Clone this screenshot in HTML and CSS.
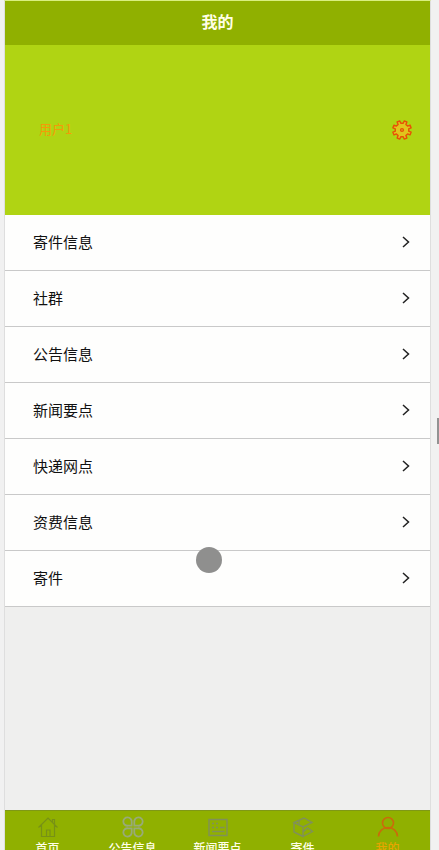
FILE: index.html
```html
<!DOCTYPE html>
<html lang="zh-CN">
<head>
    <meta charset="UTF-8">
    <meta name="viewport" content="width=device-width, initial-scale=1.0">
    <title>我的</title>
    <link rel="stylesheet" href="styles.css">
</head>
<body>

<div class="app">
    <header class="navbar">我的</header>

    <section class="profile">
        <span class="user-name">用户1</span>
        <svg class="gear" viewBox="-10 -10 20 20">
            <path d="M6.700 1.200 9.100 2.200 8 4.900 5.600 3.900 3.900 5.600 4.900 8 2.200 9.100 1.200 6.700H-1.200L-2.200 9.100-4.900 8-3.900 5.600-5.600 3.900-8 4.900-9.100 2.200-6.700 1.200V-1.200L-9.100-2.200-8-4.900-5.600-3.900-3.900-5.600-4.900-8-2.200-9.100-1.200-6.700H1.200L2.200-9.100 4.900-8 3.900-5.600 5.600-3.900 8-4.900 9.100-2.200 6.700-1.200Z"/>
            <circle cx="0" cy="0" r="1.400"/>
        </svg>
    </section>

    <nav class="menu">
        <a class="menu-item"><span>寄件信息</span><svg class="arrow" viewBox="0 0 8 12"><path d="M1 1l5.500 5L1 11"/></svg></a>
        <a class="menu-item"><span>社群</span><svg class="arrow" viewBox="0 0 8 12"><path d="M1 1l5.500 5L1 11"/></svg></a>
        <a class="menu-item"><span>公告信息</span><svg class="arrow" viewBox="0 0 8 12"><path d="M1 1l5.500 5L1 11"/></svg></a>
        <a class="menu-item"><span>新闻要点</span><svg class="arrow" viewBox="0 0 8 12"><path d="M1 1l5.500 5L1 11"/></svg></a>
        <a class="menu-item"><span>快递网点</span><svg class="arrow" viewBox="0 0 8 12"><path d="M1 1l5.500 5L1 11"/></svg></a>
        <a class="menu-item"><span>资费信息</span><svg class="arrow" viewBox="0 0 8 12"><path d="M1 1l5.500 5L1 11"/></svg></a>
        <a class="menu-item"><span>寄件</span><svg class="arrow" viewBox="0 0 8 12"><path d="M1 1l5.500 5L1 11"/></svg></a>
    </nav>

    <footer class="tabbar">
        <a class="tab home">
            <svg viewBox="0 0 22 22"><path d="M1.500 11.500 11 2l9.500 9.500M4.500 9v11.500h13V9M15.500 6V3.500h2v5M9.500 20v-6h3.500v6"/></svg>
            <span>首页</span>
        </a>
        <a class="tab">
            <svg class="bold" viewBox="0 0 22 22"><path d="M9.700 9.700H6A4.200 4.200 0 1 1 9.700 6ZM12.300 9.700H16A4.200 4.200 0 1 0 12.300 6ZM9.700 12.300H6A4.200 4.200 0 1 0 9.700 16ZM12.300 12.300H16A4.200 4.200 0 1 1 12.300 16Z"/></svg>
            <span>公告信息</span>
        </a>
        <a class="tab news">
            <svg viewBox="0 0 22 22"><path d="M2 3.500h18v16H2ZM5 7.500h2M9 7.500h2M5 11.500h2M9 11.500h2M13 11.500h4.500M5 15.500h12.500"/></svg>
            <span>新闻要点</span>
        </a>
        <a class="tab parcel">
            <svg viewBox="0 0 22 22"><path d="M2 6.500 12 2l8 4.500L11 11ZM2 6.500V16l9 4.500V11M7 9V4.300M11 16l4.500-4 5 3.500L11 20.500"/></svg>
            <span>寄件</span>
        </a>
        <a class="tab active">
            <svg viewBox="0 0 22 22"><circle cx="11" cy="7" r="5.500"/><path d="M1.500 20.500a9.500 9 0 0 1 19 0"/></svg>
            <span>我的</span>
        </a>
    </footer>
</div>

<div class="touch-dot"></div>
<div class="scroll-handle"></div>

</body>
</html>
```

FILE: styles.css
```css
body {
    margin: 0;
    height: 850px;
    overflow: hidden;
    background-color: #f1f1f1;
    font-family: "Noto Sans CJK SC", sans-serif;
}

.app {
    display: flex;
    flex-direction: column;
    box-sizing: border-box;
    width: 427px;
    height: 850px;
    margin-left: 4px;
    border: 1px solid #dedede;
    border-top-color: #d9ef80;
    border-bottom: none;
    overflow: hidden;
    background-color: #efefee;
}

/* 顶部标题 */
.navbar {
    flex: none;
    height: 44px;
    line-height: 41px;
    text-align: center;
    font-size: 16px;
    font-weight: bold;
    color: #ffffe8;
    background-color: #90b000;
}

/* 用户信息 */
.profile {
    flex: none;
    display: flex;
    align-items: center;
    justify-content: space-between;
    box-sizing: border-box;
    height: 170px;
    padding: 0 18px 0 34px;
    background-color: #b0d413;
}

.user-name {
    padding-bottom: 2px;
    font-size: 13px;
    line-height: 20px;
    color: #f59a08;
}

.gear {
    width: 20px;
    height: 20px;
    fill: #e2c41c;
    stroke: #e85005;
    stroke-width: 1.4;
    stroke-linejoin: round;
}

/* 菜单列表 */
.menu {
    flex: none;
}

.menu-item {
    display: flex;
    align-items: center;
    justify-content: space-between;
    box-sizing: border-box;
    height: 56px;
    padding: 0 20px 0 28px;
    border-bottom: 1px solid #c9c9c9;
    font-size: 15px;
    color: #111;
    background-color: #fefefd;
}

.menu-item span {
    padding-bottom: 2px;
}

.arrow {
    width: 8px;
    height: 12px;
    margin-bottom: 1px;
    fill: none;
    stroke: #222;
    stroke-width: 1.5;
}

/* 底部导航 */
.tabbar {
    flex: none;
    display: flex;
    box-sizing: border-box;
    height: 50px;
    margin-top: auto;
    margin-bottom: -10px;
    border-top: 1px solid #7f9816;
    background-color: #90b000;
}

.tab {
    flex: 1;
    display: flex;
    flex-direction: column;
    align-items: center;
    padding-top: 5px;
    font-size: 12px;
    line-height: 18px;
    white-space: nowrap;
    font-weight: 500;
    color: #ffffe8;
}

.tab svg {
    flex: none;
    width: 22px;
    height: 22px;
    margin-bottom: 1px;
    fill: none;
    stroke: #82916a;
    stroke-width: 1.2;
}

.tab .bold {
    stroke: #98aa78;
    stroke-width: 1.8;
}

.home svg {
    stroke: #779116;
}

.news svg,
.parcel svg {
    stroke: #80905a;
    stroke-width: 1.4;
}

.active {
    color: #e7a500;
}

.active svg {
    stroke: #cb6a0b;
    stroke-width: 1.6;
}

.touch-dot {
    position: absolute;
    left: 196px;
    top: 547px;
    width: 26px;
    height: 26px;
    border-radius: 50%;
    background-color: #8f8f8e;
}

.scroll-handle {
    position: absolute;
    right: 0;
    top: 418px;
    width: 2px;
    height: 26px;
    background-color: #929292;
}
```
